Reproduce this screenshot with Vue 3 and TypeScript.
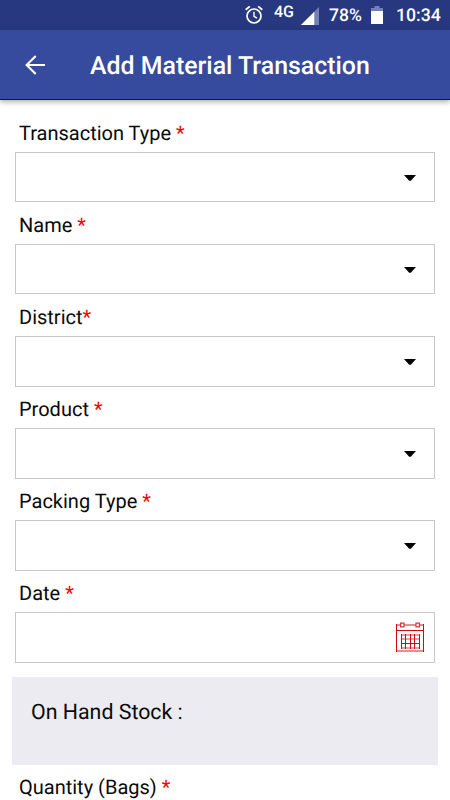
<script setup lang="ts">
interface Field {
  label: string
  gap: string
  kind: 'select' | 'date'
}

const fields: Field[] = [
  { label: 'Transaction Type', gap: ' ', kind: 'select' },
  { label: 'Name', gap: ' ', kind: 'select' },
  { label: 'District', gap: '', kind: 'select' },
  { label: 'Product', gap: ' ', kind: 'select' },
  { label: 'Packing Type', gap: ' ', kind: 'select' },
  { label: 'Date', gap: ' ', kind: 'date' },
]
</script>

<template>
  <div class="screen">
    <div class="status">
      <svg class="alarm" width="18" height="20" viewBox="0 0 18 20" fill="none" stroke="#fff">
        <circle cx="9" cy="11" r="7" stroke-width="1.7" />
        <path d="M9 6.8v4.5l3 1.9" stroke-width="1.4" />
        <path d="M.7 4.8 4.8 1.4M17.3 4.8 13.2 1.4" stroke-width="1.8" />
      </svg>
      <span class="network">4G</span>
      <svg class="signal" width="18" height="18" viewBox="0 0 18 18">
        <path d="M18 0v18H0z" fill="#7480b5" />
        <path d="M13.3 4.7V18H0z" fill="#fff" />
      </svg>
      <span class="percent">78%</span>
      <svg class="battery" width="12" height="18" viewBox="0 0 12 18">
        <path d="M3.5 0h5v2H12v3H0V2h3.5z" fill="#7480b5" />
        <path d="M0 5h12v13H0z" fill="#fff" />
      </svg>
      <span class="clock">10:34</span>
    </div>
    <header class="bar">
      <svg class="back" width="20" height="20" viewBox="0 0 20 20" fill="none" stroke="#fff" stroke-width="2.1">
        <path d="M20 10H2M10.7.9 1.6 10l9.1 9.1" />
      </svg>
      <h1 class="title">Add Material Transaction</h1>
    </header>
    <main class="form">
      <div v-for="field in fields" :key="field.label" class="field">
        <div class="label">{{ field.label }}{{ field.gap }}<span class="star">*</span></div>
        <div class="box" :class="field.kind">
          <svg v-if="field.kind === 'select'" class="caret" width="12" height="6" viewBox="0 0 12 6">
            <path d="M0 0h12L6.8 5.7H5.2z" fill="#000" />
          </svg>
          <svg v-else class="calendar" width="28" height="31" viewBox="0 0 28 31" fill="none">
            <path d="M0 3h4M8 3h12M24 3h4M0 29h28" stroke="#eb8c90" stroke-width="2" />
            <path d="M.5 2v28M27.5 2v28M0 8.5h28" stroke="#cf0a10" />
            <path d="M4.6 1.1h3.4v3.8H4.6zM20 1.1h3.4v3.8H20z" fill="#fff" stroke="#d3373c" stroke-width="1.2" />
            <path d="M5 13h19M5 17h19M5 26h19" stroke="#ed9ca0" stroke-width="2" />
            <path d="M5.5 12v15M9.5 12v15M14.5 12v15M18.5 12v15M23.5 12v15M5 21.5h19" stroke="#cf0a10" />
          </svg>
        </div>
      </div>
      <section class="stock">On Hand Stock :</section>
      <div class="label last">Quantity (Bags) <span class="star">*</span></div>
    </main>
  </div>
</template>

<style>
body {
  overflow: hidden;
}
</style>

<style scoped>
.screen {
  width: 450px;
  height: 800px;
  overflow: hidden;
  background: #fff;
  color: #0a0a0a;
  font-family: Roboto, "Liberation Sans", sans-serif;
  text-rendering: geometricPrecision;
}
.status {
  display: flex;
  align-items: flex-start;
  height: 30px;
  background: #273881;
  color: #fff;
  font-weight: 500;
}
.alarm {
  margin: 5px 0 0 245px;
}
.network {
  width: 27px;
  margin-left: 11px;
  font-size: 16px;
  line-height: 23px;
}
.signal {
  margin-top: 7px;
}
.percent {
  width: 42px;
  margin-left: 10px;
  font-size: 17.5px;
  line-height: 33px;
}
.battery {
  margin-top: 6px;
}
.clock {
  margin-left: 13px;
  font-size: 17.7px;
  line-height: 33px;
}
.bar {
  display: flex;
  align-items: center;
  box-sizing: border-box;
  height: 70px;
  padding-left: 25px;
  border-bottom: 1px solid #00128a;
  background: #364b9d;
  box-shadow: 0 2px 5px rgba(0, 0, 0, 0.32);
  color: #fff;
}
.title {
  margin: 5px 0 0 45px;
  font-size: 24.9px;
  font-weight: 500;
  line-height: 30px;
  white-space: nowrap;
}
.form {
  padding: 12px 15px 0;
}
.label {
  height: 40px;
  padding-left: 4px;
  font-size: 20px;
  line-height: 42px;
  white-space: nowrap;
}
.last {
  line-height: 44px;
}
.star {
  color: #f00;
}
.field {
  height: 92px;
}
.box {
  display: flex;
  align-items: center;
  justify-content: flex-end;
  box-sizing: border-box;
  height: 50px;
  border: 1px solid #c8c8c8;
}
.field:nth-child(n + 3) .box {
  height: 51px;
}
.select {
  padding-right: 18px;
}
.date {
  padding-right: 10px;
}
.caret {
  margin-top: 1px;
}
.stock {
  box-sizing: border-box;
  height: 88px;
  margin: 13px -2.5px 0 -3px;
  padding: 21px 19px 0;
  background: #ebebf1;
  font-size: 21.35px;
  line-height: 30px;
}
</style>
